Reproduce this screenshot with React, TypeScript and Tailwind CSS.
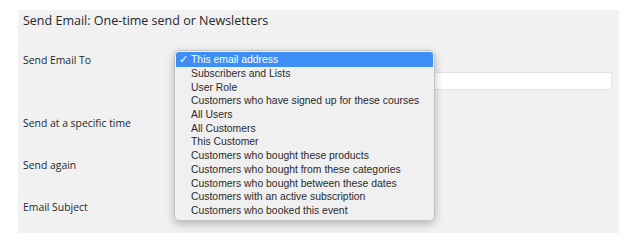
const OPTIONS = [
  "This email address",
  "Subscribers and Lists",
  "User Role",
  "Customers who have signed up for these courses",
  "All Users",
  "All Customers",
  "This Customer",
  "Customers who bought these products",
  "Customers who bought from these categories",
  "Customers who bought between these dates",
  "Customers with an active subscription",
  "Customers who booked this event",
];

function Dropdown() {
  return (
    <div className="absolute left-[156px] top-[40px] w-[261px] rounded-[5px] border border-[#c4c4c4] bg-[#f0f0f0] pt-[1px] pb-[2px] shadow-[0_3px_8px_rgba(0,0,0,0.25)] font-['Liberation_Sans',Arial,sans-serif] text-[10.4px] text-[#2b2b2b]">
      {OPTIONS.map((opt, i) => (
        <div
          key={opt}
          className={
            i === 0
              ? "mx-[1px] flex h-[15px] items-center rounded-t-[3px] bg-[#3d8ef5] text-white"
              : "mx-[1px] flex h-[13.7px] items-center"
          }
        >
          <span className="w-[15px] pl-[3px] text-[11px]">{i === 0 ? "✓" : ""}</span>
          <span className="whitespace-nowrap">{opt}</span>
        </div>
      ))}
    </div>
  );
}

export default function App() {
  return (
    <div className="h-[250px] w-[641px] bg-white pl-[18px] pt-[10px] font-['Open_Sans',sans-serif] text-[#23282d]">
      <div className="relative h-[223px] w-[601px] bg-[#f1f1f1] pl-[5px]">
        <div className="flex h-[22px] items-center text-[12.5px]">Send Email: One-time send or Newsletters</div>

        <div className="mt-[18px] flex">
          <div className="w-[152px] pt-[3px] text-[10.4px] leading-[14px]">Send Email To</div>
          <div>
            <div className="h-[16px]" />
            <div className="mt-[6px] h-[18px] w-[437px] border border-[#e2e2e2] bg-white" />
          </div>
        </div>

        <div className="mt-[26px] text-[10.4px] leading-[14px]">Send at a specific time</div>
        <div className="mt-[28px] text-[10.4px] leading-[14px]">Send again</div>
        <div className="mt-[28px] text-[10.4px] leading-[14px]">Email Subject</div>

        <Dropdown />
      </div>
    </div>
  );
}
